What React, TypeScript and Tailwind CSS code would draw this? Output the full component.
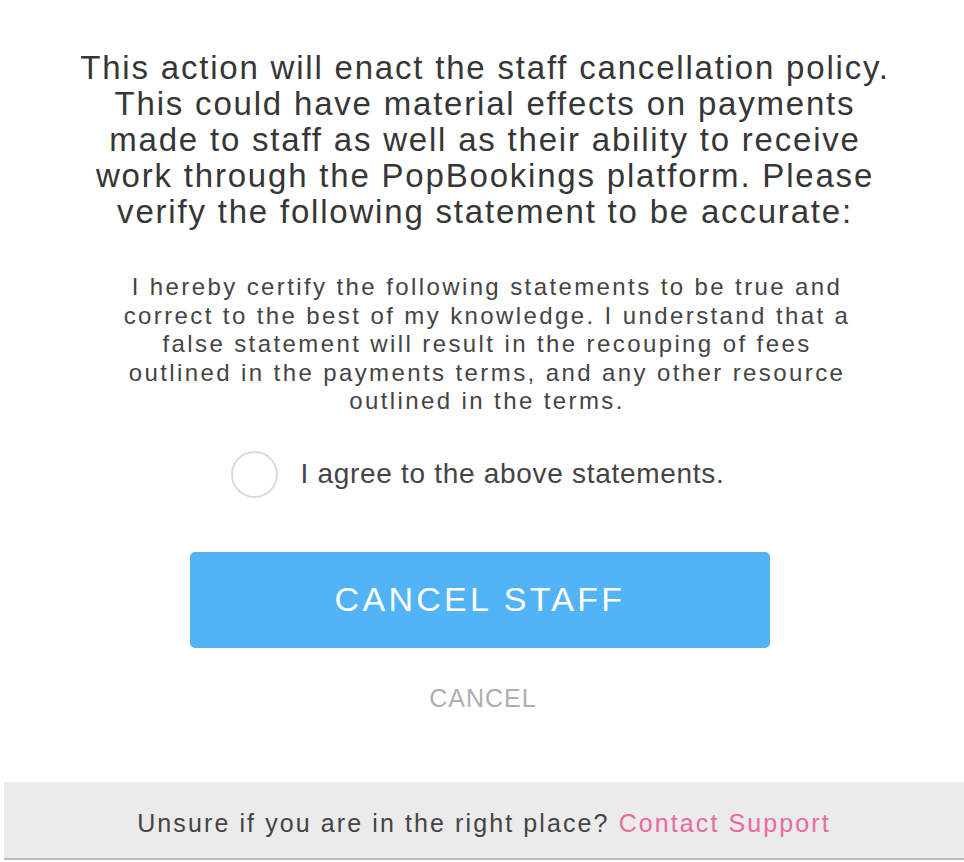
import React, { useState } from 'react';

export default function App() {
  const [agreed, setAgreed] = useState(false);

  return (
    <div
      className="flex h-[862px] w-[964px] flex-col bg-white"
      style={{ fontFamily: '"Liberation Sans", Arial, sans-serif' }}
    >
      <div className="flex flex-1 flex-col items-center pt-[50px]">
        <p className="w-[900px] pl-[6px] text-center text-[33px] leading-[36px] tracking-[1.8px] text-[#363636]">
          This action will enact the staff cancellation policy.
          <br />
          This could have material effects on payments
          <br />
          made to staff as well as their ability to receive
          <br />
          work through the PopBookings platform. Please
          <br />
          verify the following statement to be accurate:
        </p>

        <p className="mt-[43px] w-[860px] pl-[10px] text-center text-[24px] leading-[28.5px] tracking-[2.4px] text-[#444444]">
          I hereby certify the following statements to be true and
          <br />
          correct to the best of my knowledge. I understand that a
          <br />
          false statement will result in the recouping of fees
          <br />
          outlined in the payments terms, and any other resource
          <br />
          outlined in the terms.
        </p>

        <label className="mt-[35px] -ml-[9px] flex cursor-pointer items-center gap-[23px]">
          <button
            type="button"
            onClick={() => setAgreed(!agreed)}
            className="flex h-[47px] w-[47px] items-center justify-center rounded-full border-2 border-[#dadada] bg-white"
          >
            {agreed && <span className="h-[22px] w-[22px] rounded-full bg-[#52b3f7]" />}
          </button>
          <span className="text-[28px] tracking-[0.7px] text-[#444444]">I agree to the above statements.</span>
        </label>

        <button
          type="button"
          className="mt-[54px] -ml-[4px] flex h-[96px] w-[580px] items-center justify-center rounded-[5px] bg-[#52b4f7] text-[34px] tracking-[3.3px] text-white"
        >
          CANCEL STAFF
        </button>

        <button type="button" className="mt-[32px] pl-[2px] text-[25px] tracking-[1px] text-[#aeaeb4]">
          CANCEL
        </button>
      </div>

      <div className="mb-[2px] ml-[4px] flex h-[78px] items-center justify-center border-b-2 border-[#bdbdbd] bg-[#ebebeb] pt-[8px] text-[25px] tracking-[2.1px] text-[#444444]">
        <span>
          Unsure if you are in the right place?{' '}
          <a href="#" className="text-[#ea6aa0]">
            Contact Support
          </a>
        </span>
      </div>
    </div>
  );
}
